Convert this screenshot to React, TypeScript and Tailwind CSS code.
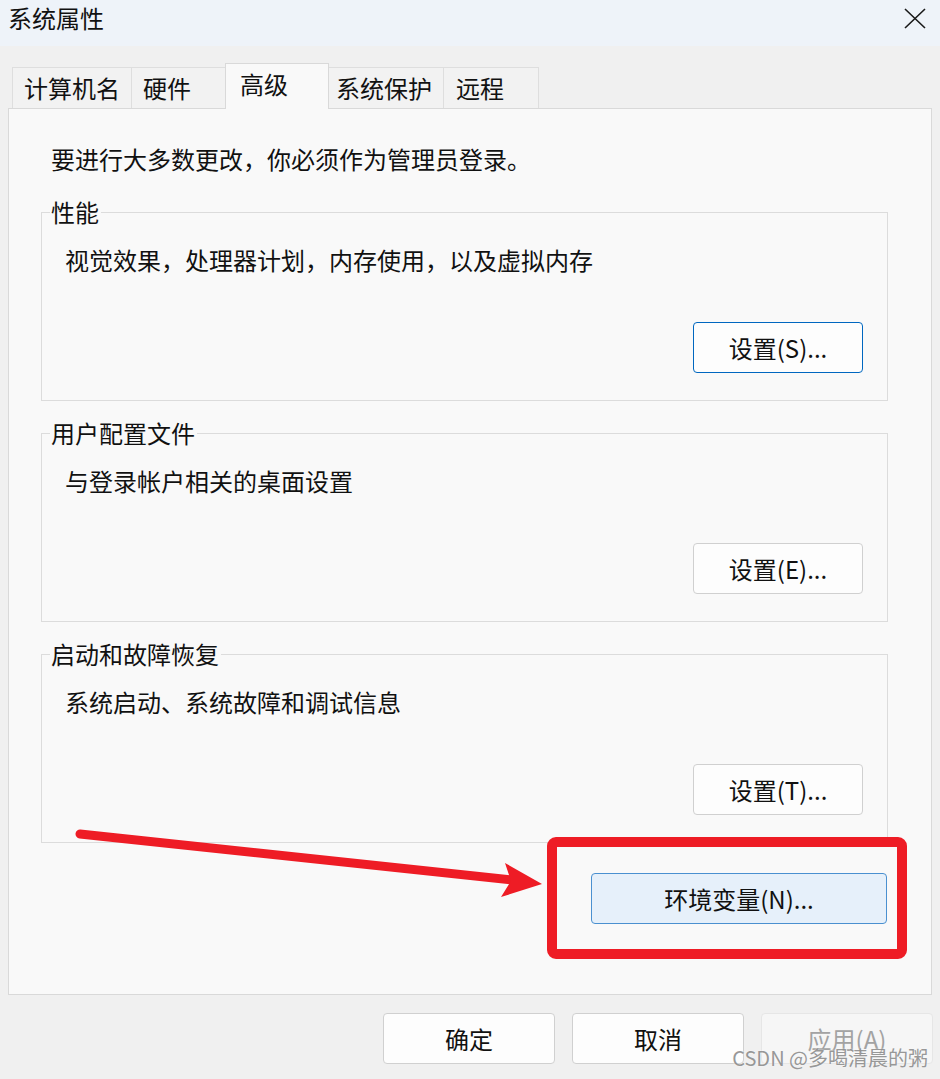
import React from "react";

const font = "font-['Noto_Sans_CJK_SC','Noto_Sans',sans-serif]";

function Tab({
  label,
  width,
  pad = "pl-[11px]",
  selected,
}: {
  label: string;
  width: string;
  pad?: string;
  selected?: boolean;
}) {
  if (selected) {
    return (
      <div
        className={`${width} relative z-10 -mb-px -ml-px h-[46px] border border-b-0 border-[#d9d9d9] bg-[#f9f9f9] pl-[14px] text-[24px] leading-[40px] text-[#111]`}
      >
        {label}
      </div>
    );
  }
  return (
    <div
      className={`${width} ${pad} -ml-px h-[41px] border border-b-0 border-[#dedede] bg-[#f2f2f2] text-[24px] leading-[40px] text-[#111] first:ml-0`}
    >
      {label}
    </div>
  );
}

function Button({
  label,
  width = "w-[170px]",
  variant = "normal",
}: {
  label: string;
  width?: string;
  variant?: "normal" | "focus" | "default" | "disabled";
}) {
  const styles = {
    normal: "border-[#d0d0d0] bg-[#fdfdfd] text-[#111]",
    focus: "border-[#0067c0] bg-[#fdfdfd] text-[#111]",
    default: "border-[#4a90d0] bg-[#e6f0fa] text-[#111]",
    disabled: "border-[#e6e6e6] bg-[#f6f6f6] text-[#a3a3a3]",
  }[variant];
  return (
    <div
      className={`${width} ${styles} flex h-[51px] items-center justify-center rounded-[4px] border text-[24px] leading-[32px]`}
    >
      {label}
    </div>
  );
}

function GroupBox({
  title,
  text,
  button,
  focus,
}: {
  title: string;
  text: string;
  button: string;
  focus?: boolean;
}) {
  return (
    <div className="relative h-[189px] w-[847px] border border-[#dcdcdc]">
      <div className="absolute left-[8px] top-[-17px] bg-[#f9f9f9] pl-[1px] pr-[2px] text-[24px] leading-[32px] text-[#111]">
        {title}
      </div>
      <div className="pl-[23px] pt-[31px] text-[24px] leading-[32px] text-[#111]">{text}</div>
      <div className="mt-[46px] flex justify-end pr-[24px]">
        <Button label={button} variant={focus ? "focus" : "normal"} />
      </div>
    </div>
  );
}

export default function App() {
  return (
    <div className={`${font} relative h-[1079px] w-[940px] overflow-hidden bg-[#f0f0f0]`}>
      {/* title bar */}
      <div className="flex h-[46px] items-start justify-between bg-[#eef3f9] pl-[8px] pr-[14px]">
        <div className="pt-[2px] text-[24px] leading-[32px] text-[#111]">系统属性</div>
        <svg className="mt-[8px]" width="22" height="21" viewBox="0 0 22 21">
          <path d="M1 1 L21 20 M21 1 L1 20" stroke="#1a1a1a" strokeWidth="1.6" fill="none" />
        </svg>
      </div>

      {/* tabs */}
      <div className="mt-[17px] flex items-end pl-[12px]">
        <Tab label="计算机名" width="w-[120px]" />
        <Tab label="硬件" width="w-[95px]" />
        <Tab label="高级" width="w-[104px]" selected />
        <Tab label="系统保护" width="w-[116px]" pad="pl-[7px]" />
        <Tab label="远程" width="w-[96px]" pad="pl-[12px]" />
      </div>

      {/* panel */}
      <div className="mx-[8px] h-[887px] w-[924px] border border-[#d9d9d9] bg-[#f9f9f9] pl-[32px]">
        <div className="ml-[10px] pt-[34px] text-[24px] leading-[32px] text-[#111]">
          要进行大多数更改，你必须作为管理员登录。
        </div>
        <div className="mt-[37px] flex flex-col gap-[32px]">
          <GroupBox title="性能" text="视觉效果，处理器计划，内存使用，以及虚拟内存" button="设置(S)..." focus />
          <GroupBox title="用户配置文件" text="与登录帐户相关的桌面设置" button="设置(E)..." />
          <GroupBox title="启动和故障恢复" text="系统启动、系统故障和调试信息" button="设置(T)..." />
        </div>
        <div className="mt-[30px] flex w-[847px] justify-end pr-[1px]">
          <Button label="环境变量(N)..." width="w-[296px]" variant="default" />
        </div>
      </div>

      {/* dialog buttons */}
      <div className="mt-[18px] flex justify-end gap-[17px] pr-[7px]">
        <Button label="确定" width="w-[172px]" />
        <Button label="取消" width="w-[172px]" />
        <Button label="应用(A)" width="w-[172px]" variant="disabled" />
      </div>

      {/* annotation overlay */}
      <svg className="pointer-events-none absolute left-0 top-0" width="940" height="1079" viewBox="0 0 940 1079">
        <path d="M80 834 L512 880" stroke="#ee1c25" strokeWidth="9" strokeLinecap="round" fill="none" />
        <polygon points="505,863 542,884 501,897 511,881" fill="#ee1c25" />
        <rect x="552" y="842" width="350" height="112" rx="4" stroke="#ee1c25" strokeWidth="10" fill="none" />
      </svg>

      {/* watermark */}
      <div className="pointer-events-none absolute right-[12px] top-[1044px] text-[20px] leading-[28px] text-[#8e8e8e] opacity-90 [text-shadow:0_0_2px_#ffffff]">
        CSDN @多喝清晨的粥
      </div>
    </div>
  );
}
